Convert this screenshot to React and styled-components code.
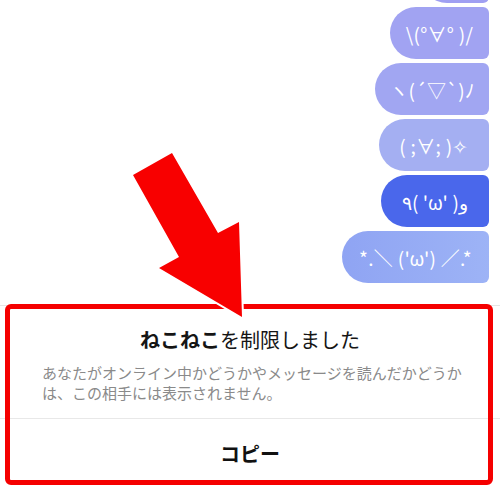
import styled, { createGlobalStyle } from "styled-components";

const GlobalStyle = createGlobalStyle`
  html, body {
    margin: 0;
    padding: 0;
    background: #ffffff;
  }
  body {
    font-family: "Noto Sans CJK JP", "Noto Sans", sans-serif;
  }
`;

const Page = styled.div`
  position: relative;
  width: 500px;
  height: 488px;
  overflow: hidden;
  background: #ffffff;
`;

const Chat = styled.div`
  height: 305px;
  overflow: hidden;
  padding-right: 11px;
  box-sizing: border-box;
`;

const BubbleList = styled.div`
  display: flex;
  flex-direction: column;
  align-items: flex-end;
  gap: 4px;
  margin-top: -49px;
`;

const Bubble = styled.div`
  width: ${(p) => p.$w}px;
  height: 52px;
  display: flex;
  align-items: center;
  justify-content: center;
  border-radius: 26px 6px 6px 26px;
  background: ${(p) => p.$bg};
  color: #ffffff;
  font-family: "Noto Sans CJK JP", sans-serif;
  font-size: 19px;
  letter-spacing: 0.3px;
  white-space: nowrap;
`;

const Sheet = styled.div`
  border-top: 1px solid #e6e6e6;
`;

const Body = styled.div`
  padding: 20px 0 15px;
`;

const Title = styled.div`
  text-align: center;
  font-size: 20px;
  line-height: 28px;
  color: #151515;
  b {
    font-weight: 700;
  }
`;

const Note = styled.p`
  margin: 9px 0 0 42px;
  max-width: 424px;
  font-size: 15px;
  line-height: 20px;
  color: #8a8a8a;
`;

const Divider = styled.hr`
  margin: 0;
  border: none;
  border-top: 1px solid #e8e8e8;
`;

const CopyButton = styled.button`
  display: block;
  width: 100%;
  height: 68px;
  border: none;
  background: none;
  font-family: "Noto Sans CJK JP", sans-serif;
  font-size: 20px;
  font-weight: 700;
  color: #111111;
  cursor: pointer;
`;

const Highlight = styled.div`
  position: absolute;
  left: 5px;
  top: 304px;
  width: 488px;
  height: 181px;
  box-sizing: border-box;
  border: 5px solid #f50000;
  border-radius: 6px;
  pointer-events: none;
`;

const Arrow = styled.svg`
  position: absolute;
  left: 0;
  top: 0;
  pointer-events: none;
`;

// the first bubble is scrolled almost out of view, only its bottom edge shows
const bubbles = [
  { text: "", w: 68, bg: "#9f9ff2" },
  { text: "\\(°∀° )/", w: 99, bg: "#a1a3f2" },
  { text: "ヽ(´▽`)ﾉ", w: 114, bg: "#a1a6f2" },
  { text: "( ;∀; )✧", w: 110, bg: "#a4aff2" },
  { text: "٩( 'ω' )و", w: 108, bg: "#4a67eb" },
  { text: "*.＼ ('ω') ／.*", w: 147, bg: "linear-gradient(90deg, #8fa4f3, #9db3f6)" },
];

const App = () => {
  return (
    <Page>
      <GlobalStyle />
      <Chat>
        <BubbleList>
          {bubbles.map((b, i) => (
            <Bubble key={i} $w={b.w} $bg={b.bg}>
              {b.text}
            </Bubble>
          ))}
        </BubbleList>
      </Chat>
      <Sheet>
        <Body>
          <Title>
            <b>ねこねこ</b>を制限しました
          </Title>
          <Note>
            あなたがオンライン中かどうかやメッセージを読んだかどうかは、この相手には表示されません。
          </Note>
        </Body>
        <Divider />
        <CopyButton>コピー</CopyButton>
      </Sheet>
      <Highlight />
      <Arrow width="500" height="488" viewBox="0 0 500 488">
        <polygon
          points="133,175 172,153 218,233 239,222 242,317 159,268 179,257"
          fill="#f80000"
          stroke="#ffffff"
          strokeWidth="4"
          strokeLinejoin="miter"
          paintOrder="stroke"
        />
      </Arrow>
    </Page>
  );
};

export default App;
